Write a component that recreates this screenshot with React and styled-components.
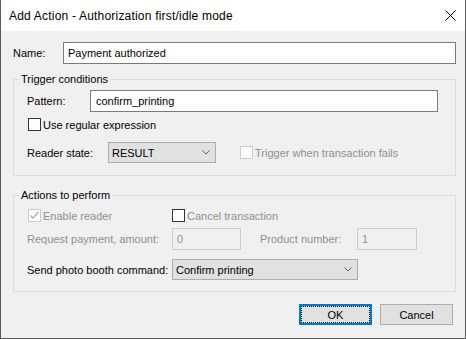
import styled, { createGlobalStyle } from 'styled-components'

const GlobalStyle = createGlobalStyle`
    html, body {
        margin: 0;
        padding: 0;
        background: #f0f0f0;
    }
    * {
        box-sizing: border-box;
    }
`

const Window = styled.div`
    width: 466px;
    height: 339px;
    display: flex;
    flex-direction: column;
    background: #f0f0f0;
    border: 1px solid #5a5a5a;
    border-top: none;
    font-family: "Liberation Sans", Arial, sans-serif;
    font-size: 11px;
    color: #000;
`

const TitleBar = styled.div`
    height: 31px;
    flex: none;
    display: flex;
    align-items: center;
    justify-content: space-between;
    background: #fff;
    padding: 0 9px 0 8px;
`

const TitleText = styled.span`
    font-size: 12px;
    color: #000;
    letter-spacing: 0.2px;
`

const Body = styled.div`
    display: flex;
    flex-direction: column;
    padding: 0 9px 0 12px;
`

const Row = styled.div`
    display: flex;
    align-items: center;
    margin-top: ${p => p.$mt || 0}px;
    height: ${p => p.$h || 22}px;
`

const Label = styled.span`
    flex: none;
    width: ${p => p.$w ? p.$w + 'px' : 'auto'};
    margin-left: ${p => p.$ml || 0}px;
    color: ${p => p.$disabled ? '#8f8f8f' : '#000'};
    white-space: nowrap;
`

const TextBox = styled.div`
    flex: none;
    width: ${p => p.$w}px;
    height: 22px;
    display: flex;
    align-items: center;
    padding-left: ${p => p.$pl || 4}px;
    background: ${p => p.$disabled ? '#f0f0f0' : '#fff'};
    border: 1px solid ${p => p.$disabled ? '#cccccc' : '#7a7a7a'};
    color: ${p => p.$disabled ? '#8f8f8f' : '#000'};
    white-space: nowrap;
`

const Combo = styled.div`
    flex: none;
    width: ${p => p.$w}px;
    height: 21px;
    display: flex;
    align-items: center;
    justify-content: space-between;
    padding: 0 5px 0 3px;
    background: #e1e1e1;
    border: 1px solid #adadad;
    white-space: nowrap;
`

const Group = styled.fieldset`
    margin: ${p => p.$mt}px 0 0 0;
    padding: 0 0 0 5px;
    border: 1px solid #dcdcdc;
    min-inline-size: 0;
`

const Legend = styled.legend`
    padding: 0 2px;
    line-height: 14px;
    font-size: 11px;
`

const GroupContent = styled.div`
    display: flex;
    flex-direction: column;
    padding: 0 0 ${p => p.$pb}px 8px;
`

const Check = styled.span`
    flex: none;
    width: 13px;
    height: 13px;
    margin-left: ${p => p.$ml || 0}px;
    margin-right: 2px;
    display: flex;
    align-items: center;
    justify-content: center;
    background: #fff;
    border: 1px solid ${p => p.$disabled ? '#cccccc' : '#333333'};
`

const CheckItem = styled.div`
    flex: none;
    display: flex;
    align-items: center;
    width: ${p => p.$w ? p.$w + 'px' : 'auto'};
    margin-left: ${p => p.$ml || 0}px;
`

const ButtonRow = styled.div`
    display: flex;
    justify-content: flex-end;
    gap: 8px;
    margin-top: 12px;
    padding-right: 3px;
`

const Button = styled.div`
    position: relative;
    width: 73px;
    height: 21px;
    display: flex;
    align-items: center;
    justify-content: center;
    background: #e1e1e1;
    border: ${p => p.$default ? '2px solid #0078d7' : '1px solid #adadad'};
    font-size: 11px;

    ${p => p.$default && `
        &::after {
            content: '';
            position: absolute;
            inset: 0px;
            border: 1px dotted #000;
        }
    `}
`

function Chevron() {
    return (
        <svg width="8" height="5" viewBox="0 0 8 5">
            <path d="M0.5 0.5 L4 4 L7.5 0.5" fill="none" stroke="#606060" strokeWidth="1" />
        </svg>
    )
}

function CheckBox({ checked, disabled, ml }) {
    return (
        <Check $disabled={disabled} $ml={ml}>
            {checked && (
                <svg width="11" height="11" viewBox="0 0 11 11">
                    <path d="M1.5 5.5 L4 8 L9.5 2" fill="none" stroke={disabled ? '#a8a8a8' : '#000'} strokeWidth="1.2" />
                </svg>
            )}
        </Check>
    )
}

export default function App() {
    return (
        <>
            <GlobalStyle />
            <Window>
                <TitleBar>
                    <TitleText>Add Action - Authorization first/idle mode</TitleText>
                    <svg width="11" height="11" viewBox="0 0 11 11">
                        <path d="M0.5 0.5 L10.5 10.5 M10.5 0.5 L0.5 10.5" stroke="#000" strokeWidth="1" />
                    </svg>
                </TitleBar>
                <Body>
                    <Row $mt={11}>
                        <Label $w={50}>Name:</Label>
                        <TextBox $w={393}>Payment authorized</TextBox>
                    </Row>

                    <Group $mt={8}>
                        <Legend>Trigger conditions</Legend>
                        <GroupContent $pb={12}>
                            <Row $mt={4}>
                                <Label $w={63}>Pattern:</Label>
                                <TextBox $w={348} $pl={5}>confirm_printing</TextBox>
                            </Row>
                            <Row $mt={6} $h={13}>
                                <CheckItem>
                                    <CheckBox ml={1} />
                                    <Label>Use regular expression</Label>
                                </CheckItem>
                            </Row>
                            <Row $mt={11} $h={21}>
                                <Label $w={81}>Reader state:</Label>
                                <Combo $w={108}>
                                    RESULT
                                    <Chevron />
                                </Combo>
                                <CheckItem $ml={24}>
                                    <CheckBox disabled />
                                    <Label $disabled>Trigger when transaction fails</Label>
                                </CheckItem>
                            </Row>
                        </GroupContent>
                    </Group>

                    <Group $mt={12}>
                        <Legend>Actions to perform</Legend>
                        <GroupContent $pb={11}>
                            <Row $mt={7} $h={13}>
                                <CheckItem $w={145}>
                                    <CheckBox checked disabled ml={1} />
                                    <Label $disabled>Enable reader</Label>
                                </CheckItem>
                                <CheckItem>
                                    <CheckBox />
                                    <Label $disabled>Cancel transaction</Label>
                                </CheckItem>
                            </Row>
                            <Row $mt={6}>
                                <Label $w={145} $disabled>Request payment, amount:</Label>
                                <TextBox $w={69} $disabled>0</TextBox>
                                <Label $w={97} $ml={19} $disabled>Product number:</Label>
                                <TextBox $w={60} $disabled>1</TextBox>
                            </Row>
                            <Row $mt={9} $h={21}>
                                <Label $w={145}>Send photo booth command:</Label>
                                <Combo $w={186}>
                                    Confirm printing
                                    <Chevron />
                                </Combo>
                            </Row>
                        </GroupContent>
                    </Group>

                    <ButtonRow>
                        <Button $default>OK</Button>
                        <Button>Cancel</Button>
                    </ButtonRow>
                </Body>
            </Window>
        </>
    )
}
